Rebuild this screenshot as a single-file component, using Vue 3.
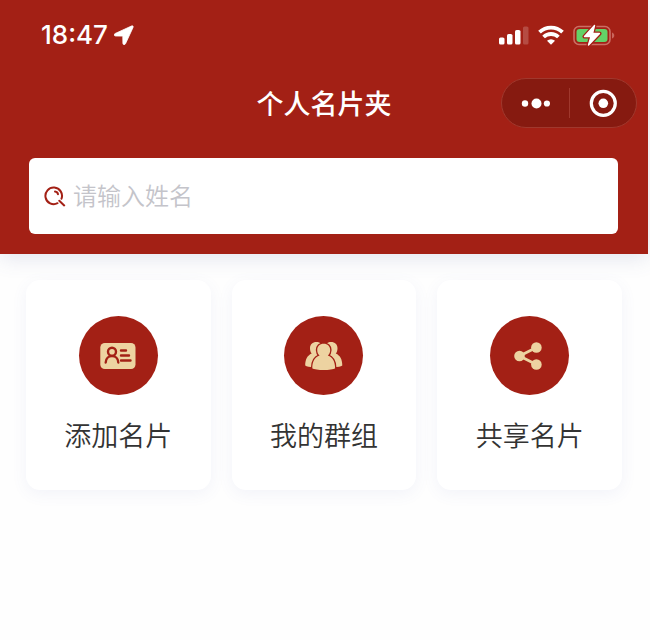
<script setup>
import { ref } from 'vue'

const keyword = ref('')
const actions = [
  { id: 'card', label: '添加名片' },
  { id: 'group', label: '我的群组' },
  { id: 'share', label: '共享名片' },
]
</script>

<template>
  <div class="page">
    <header class="header">
      <div class="status">
        <div class="clock">
          <span>18:47</span>
          <svg width="20" height="20" viewBox="0 0 20 20" aria-hidden="true">
            <path d="M17.500 1 1.200 8.500c-1.500.700-1.200 2.500.4 2.500l7.200.1.1 7.200c0 1.600 1.900 1.900 2.600.4L19 2.500C19.600 1.300 18.700.400 17.500 1Z" fill="#fff" stroke="#fff" stroke-width=".8" />
          </svg>
        </div>
        <div class="indicators">
          <svg width="30" height="20" viewBox="0 0 30 20" aria-hidden="true">
            <g fill="#fff">
              <rect x="0" y="12.500" width="5.500" height="7" rx="1.600" />
              <rect x="8" y="9" width="5.500" height="10.500" rx="1.600" />
              <rect x="16" y="5" width="5.500" height="14.500" rx="1.600" />
              <rect x="24" y="1.500" width="5.500" height="18" rx="1.600" opacity=".2" />
            </g>
          </svg>
          <svg width="26" height="20" viewBox="0 0 26 20" aria-hidden="true">
            <g fill="none" stroke="#fff" stroke-width="3.800">
              <path d="M1.500 7.200a16.500 16.500 0 0 1 23 0" />
              <path d="M5.600 12a10.600 10.600 0 0 1 14.800 0" />
            </g>
            <path d="M9 15.800a5.900 5.900 0 0 1 8 0l-4 4Z" fill="#fff" />
          </svg>
          <svg width="42" height="22" viewBox="0 0 42 22" aria-hidden="true">
            <rect x="1" y="2.500" width="36" height="18" rx="5" fill="none" stroke="#cb6e64" stroke-width="1.600" />
            <path d="M39 8.500v6c3-1 3-5 0-6Z" fill="#c9665c" />
            <rect x="3.500" y="5" width="31" height="13" rx="3" fill="#63d267" />
            <path d="M21.500 1.500 11.500 12.500h6.500l-2.500 8.500 11-11.500h-7Z" fill="#fff" stroke="#a32015" stroke-width="4" paint-order="stroke" stroke-linejoin="round" />
            <path d="M21.500 1.500 11.500 12.500h6.500l-2.500 8.500 11-11.500h-7Z" fill="#fff" stroke="#fff" stroke-width="1.400" stroke-linejoin="round" />
          </svg>
        </div>
      </div>

      <div class="nav">
        <h1>个人名片夹</h1>
        <div class="capsule">
          <button type="button" aria-label="更多">
            <svg width="30" height="12" viewBox="0 0 30 12" fill="#fff" aria-hidden="true">
              <circle cx="5" cy="6.500" r="3.200" /><circle cx="16.500" cy="6.500" r="5" /><circle cx="26.900" cy="6.500" r="3.100" />
            </svg>
          </button>
          <button type="button" aria-label="关闭">
            <svg width="28" height="28" viewBox="0 0 28 28" aria-hidden="true">
              <circle cx="14.300" cy="14.300" r="12" fill="none" stroke="#fff" stroke-width="3.200" />
              <circle cx="14.300" cy="14.300" r="4.800" fill="#fff" />
            </svg>
          </button>
        </div>
      </div>

      <label class="search">
        <svg width="22" height="22" viewBox="0 0 22 22" fill="none" stroke="#a32015" stroke-width="2" stroke-linecap="round" aria-hidden="true">
          <path d="M13.500 18.200a8.300 8.300 0 1 1 4-4.500M15.300 15.800l4.900 4.600" />
          <path d="M11 6.600c1.500.2 2.700 1.300 3 2.700" />
        </svg>
        <input v-model="keyword" type="text" placeholder="请输入姓名" aria-label="请输入姓名" />
      </label>
    </header>

    <main class="actions">
      <button v-for="item in actions" :key="item.id" type="button" class="card">
        <span class="badge">
          <svg v-if="item.id === 'card'" width="36" height="28" viewBox="0 0 36 28" aria-hidden="true">
            <rect x=".3" y="1" width="35.200" height="26" rx="4.500" fill="#edd3a1" />
            <g fill="none" stroke="#a32015" stroke-width="2.400" stroke-linecap="round">
              <circle cx="12" cy="9.800" r="4" />
              <path d="M5.700 20.500c.3-8.500 12.300-8.500 12.600 0M21 8.500h5M21 13.500h8M21 18.500h9.500" />
            </g>
          </svg>
          <svg v-else-if="item.id === 'group'" width="38" height="30" viewBox="0 0 38 30" aria-hidden="true">
            <g fill="#edd3a1">
              <path d="M11.500 1c4 0 6 2.500 6 6 0 2.500-1 4.500-2.500 5.500C10.500 15 9 19 8.700 26 4.500 26 1.700 25.500.2 24.500c0-6 2-10 6.500-12C5.500 11 5 9.500 5 7.200 5 3.500 7.500 1 11.500 1Z" />
              <path d="M26 1c-4 0-6 2.500-6 6 0 2.500 1 4.500 2.500 5.500C27 15 28.500 19 28.800 26c4.200 0 7-.5 8.500-1.500 0-6-2-10-6.500-12 1.200-1.500 1.700-3 1.700-5.300C32.500 3.500 30 1 26 1Z" />
              <path d="M18.700 2.800c-4 0-6.500 2.700-6.500 6.300 0 2.300.9 4.200 2.400 5.500-4.900 1.700-7.300 6.400-7.300 12.600 3 2.400 19.800 2.400 22.800 0 0-6.200-2.400-10.900-7.300-12.600 1.500-1.300 2.400-3.200 2.400-5.500 0-3.600-2.500-6.300-6.500-6.300Z" stroke="#a32015" stroke-width="2.800" paint-order="stroke" />
            </g>
          </svg>
          <svg v-else width="32" height="28" viewBox="0 0 32 28" aria-hidden="true">
            <path d="M22.400 5.500 5.500 14l16.900 8.500" fill="none" stroke="#edd3a1" stroke-width="2.800" />
            <g fill="#edd3a1">
              <circle cx="22.400" cy="5.500" r="5.300" /><circle cx="5.500" cy="14" r="5.300" /><circle cx="22.400" cy="22.500" r="5.300" />
            </g>
          </svg>
        </span>
        <span class="label">{{ item.label }}</span>
      </button>
    </main>
  </div>
</template>

<style>
body {
  background: #fefefe;
}
</style>

<style scoped>
.page {
  margin-right: 2px;
  font-family: "Noto Sans CJK SC", sans-serif;
}
.header {
  padding-bottom: 20px;
  background: #a32015;
  box-shadow: 0 4px 20px rgba(80, 95, 150, 0.16);
}
.status {
  display: flex;
  justify-content: space-between;
  align-items: center;
  height: 70px;
  padding: 0 33px 0 41px;
}
.clock {
  display: flex;
  align-items: center;
  gap: 6px;
  color: #fff;
  font: 500 26px/30px Inter, sans-serif;
}
.indicators {
  display: flex;
  align-items: center;
  gap: 9px;
}
.nav {
  display: grid;
  grid-template-columns: 1fr auto 1fr;
  align-items: center;
  padding: 8px 11px 0;
}
h1 {
  grid-column: 2;
  margin: 0;
  color: #fff;
  font-size: 27px;
  font-weight: 500;
  line-height: 40px;
}
.capsule {
  display: flex;
  align-items: center;
  justify-self: end;
  box-sizing: border-box;
  width: 136px;
  height: 50px;
  border: 1px solid #a0382d;
  border-radius: 25px;
  background: #861a10;
}
.capsule button {
  display: flex;
  flex: 1;
  justify-content: center;
  align-items: center;
  height: 30px;
  padding: 0;
  border: 0;
  background: none;
}
.capsule button + button {
  border-left: 1px solid #a0382d;
}
.search {
  display: flex;
  align-items: center;
  gap: 7px;
  height: 76px;
  margin: 30px 30px 0 29px;
  padding: 0 15px;
  box-sizing: border-box;
  border-radius: 6px;
  background: #fff;
}
.search input {
  flex: 1;
  min-width: 0;
  height: 40px;
  padding: 0 0 4px;
  box-sizing: border-box;
  border: 0;
  outline: 0;
  background: none;
  color: #333;
  font: 350 24px/36px "Noto Sans CJK SC", sans-serif;
}
.search input::placeholder {
  color: #c4c4ca;
  opacity: 1;
}
.actions {
  display: grid;
  grid-template-columns: repeat(3, 1fr);
  gap: 21px;
  padding: 26px;
}
.card {
  display: flex;
  flex-direction: column;
  align-items: center;
  gap: 20px;
  padding: 36px 0 35px;
  border: 0;
  border-radius: 14px;
  background: #fff;
  box-shadow: 0 4px 16px rgba(90, 100, 180, 0.07);
}
.badge {
  display: flex;
  justify-content: center;
  align-items: center;
  width: 79px;
  height: 79px;
  border-radius: 50%;
  background: #a32015;
}
.label {
  color: #333;
  font: 350 27px/40px "Noto Sans CJK SC", sans-serif;
}
</style>
